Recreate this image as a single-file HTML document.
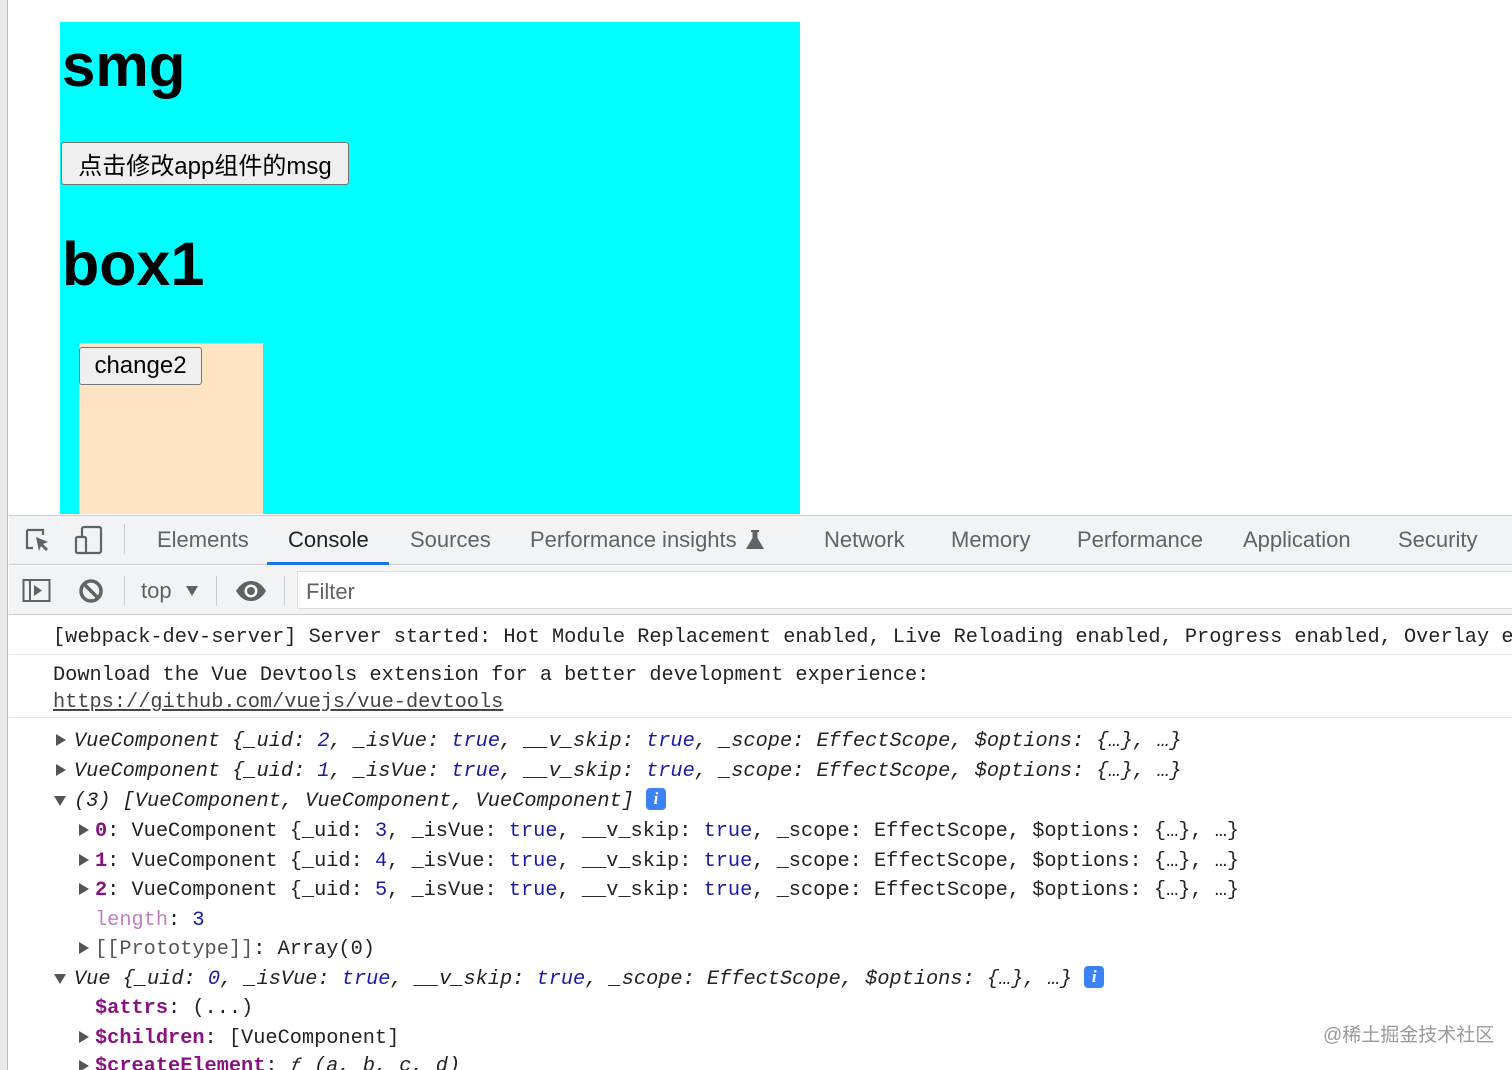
<!DOCTYPE html>
<html><head><meta charset="utf-8"><style>
*{margin:0;padding:0;box-sizing:border-box}
html,body{width:1512px;height:1070px;overflow:hidden;background:#fff;font-family:"Liberation Sans","Noto Sans CJK SC",sans-serif;position:relative}
.abs{position:absolute}
#lbar{left:0;top:0;width:8px;height:1070px;background:#e8e8e8;border-right:1px solid #bbb}
#cyan{left:60px;top:22px;width:740px;height:492px;background:#00ffff}
h1{position:absolute;font-weight:bold;color:#000;line-height:1}
.btn{position:absolute;background:#efefef;border:1.5px solid #767676;border-radius:3px;font-size:24px;color:#000;display:flex;align-items:center;justify-content:center}
#peach{left:79px;top:343px;width:184px;height:171px;background:#ffe4c4}
#tb1{left:9px;top:515px;width:1503px;height:50px;background:#f1f3f4;border-bottom:1px solid #cacdd1;border-top:1px solid #d0d0d0}
#tb2{left:9px;top:566px;width:1503px;height:49px;background:#f1f3f4;border-bottom:1px solid #cacdd1}
.tab{position:absolute;top:527px;font-size:22px;color:#5f6368;white-space:nowrap}
.mono{position:absolute;left:0;top:0;width:1512px;height:1070px;overflow:hidden;font-family:"Liberation Mono","DejaVu Sans Mono",monospace;font-size:20.3px;white-space:pre;color:#222;line-height:30px}
.ln{position:absolute;left:53px}
.i{font-style:italic}
.b{color:#1a1aa6}
.kb{color:#881280;font-weight:bold}
.lk{color:#c080c0}
.tri{position:absolute;width:0;height:0}
.tr{border-left:10px solid #555;border-top:6px solid transparent;border-bottom:6px solid transparent}
.td{border-top:10px solid #555;border-left:6px solid transparent;border-right:6px solid transparent}
.info{display:inline-block;width:20px;height:22px;background:#3b82f6;border-radius:4px;color:#fff;font-style:italic;font-weight:bold;font-size:17px;line-height:22px;text-align:center;vertical-align:2px;font-family:"Liberation Serif",serif}
</style></head><body>
<div class="abs" id="lbar"></div>
<div class="abs" id="cyan"></div>
<h1 style="left:62px;top:36px;font-size:60px">smg</h1>
<div class="btn" style="left:61px;top:142px;width:288px;height:43px">点击修改app组件的msg</div>
<h1 style="left:62px;top:234px;font-size:61px">box1</h1>
<div class="abs" id="peach"></div>
<div class="btn" style="left:79px;top:347px;width:123px;height:38px">change2</div>

<div class="abs" id="tb1"></div>
<svg class="abs" style="left:24px;top:527px" width="30" height="28" viewBox="0 0 30 28"><path d="M3 3h16v5M3 3v18h6" fill="none" stroke="#5f6368" stroke-width="2.2"/><path d="M12 10l12 5-5 2 5 5-2 2-5-5-2 5z" fill="#5f6368"/></svg>
<svg class="abs" style="left:73px;top:524px" width="32" height="32" viewBox="0 0 32 32"><rect x="9" y="3" width="19" height="26" rx="2" fill="none" stroke="#5f6368" stroke-width="2.2"/><rect x="3" y="13" width="10" height="16" rx="1.5" fill="#f1f3f4" stroke="#5f6368" stroke-width="2.2"/></svg>
<div class="abs" style="left:124px;top:524px;width:1px;height:30px;background:#ccc"></div>
<div class="tab" style="left:157px">Elements</div>
<div class="tab" style="left:288px;color:#202124">Console</div>
<div class="abs" style="left:267px;top:562px;width:122px;height:3px;background:#1a73e8"></div>
<div class="tab" style="left:410px">Sources</div>
<div class="tab" style="left:530px">Performance insights</div>
<svg class="abs" style="left:745px;top:529px" width="20" height="22" viewBox="0 0 20 22"><path d="M6 1h8v2h-1.5v6L19 20H1L7.5 9V3H6z" fill="#5f6368"/></svg>
<div class="tab" style="left:824px">Network</div>
<div class="tab" style="left:951px">Memory</div>
<div class="tab" style="left:1077px">Performance</div>
<div class="tab" style="left:1243px">Application</div>
<div class="tab" style="left:1398px">Security</div>

<div class="abs" id="tb2"></div>
<svg class="abs" style="left:22px;top:578px" width="30" height="26" viewBox="0 0 30 26"><rect x="1.5" y="2" width="26" height="21" fill="none" stroke="#5f6368" stroke-width="2"/><line x1="8" y1="2" x2="8" y2="23" stroke="#5f6368" stroke-width="2"/><path d="M12 7l8 5.5-8 5.5z" fill="#5f6368"/></svg>
<svg class="abs" style="left:78px;top:578px" width="26" height="26" viewBox="0 0 26 26"><circle cx="13" cy="13" r="10" fill="none" stroke="#5f6368" stroke-width="3.5"/><line x1="6" y1="6" x2="20" y2="20" stroke="#5f6368" stroke-width="3.5"/></svg>
<div class="abs" style="left:124px;top:576px;width:1px;height:30px;background:#ccc"></div>
<div class="abs" style="left:141px;top:578px;font-size:22px;color:#5f6368">top</div>
<div class="tri td abs" style="left:186px;top:586px;border-top-color:#5f6368"></div>
<div class="abs" style="left:216px;top:576px;width:1px;height:30px;background:#ccc"></div>
<svg class="abs" style="left:235px;top:580px" width="32" height="22" viewBox="0 0 32 22"><path d="M1 11C6 3 11 1 16 1s10 2 15 10c-5 8-10 10-15 10S6 19 1 11z" fill="#5f6368"/><circle cx="16" cy="11" r="6.5" fill="#fff"/><circle cx="16" cy="11" r="4" fill="#5f6368"/></svg>
<div class="abs" style="left:284px;top:576px;width:1px;height:30px;background:#ccc"></div>
<div class="abs" style="left:297px;top:571px;width:1215px;height:38px;background:#fff;border:1px solid #ddd;border-right:none"></div>
<div class="abs" style="left:306px;top:579px;font-size:22px;color:#5f6368">Filter</div>

<div class="abs" style="left:9px;top:654px;width:1503px;height:1px;background:#e8e8e8"></div>
<div class="abs" style="left:9px;top:717px;width:1503px;height:1px;background:#e8e8e8"></div>

<div class="mono">
<div class="ln" style="top:623px">[webpack-dev-server] Server started: Hot Module Replacement enabled, Live Reloading enabled, Progress enabled, Overlay enabled.</div>
<div class="ln" style="top:661px">Download the Vue Devtools extension for a better development experience:</div>
<div class="ln" style="top:688px;text-decoration:underline;color:#444">https://github.com/vuejs/vue-devtools</div>

<div class="tri tr" style="left:56px;top:734px"></div>
<div class="ln i" style="left:74px;top:727px">VueComponent {_uid: <span class="b">2</span>, _isVue: <span class="b">true</span>, __v_skip: <span class="b">true</span>, _scope: EffectScope, $options: {…}, …}</div>
<div class="tri tr" style="left:56px;top:764px"></div>
<div class="ln i" style="left:74px;top:757px">VueComponent {_uid: <span class="b">1</span>, _isVue: <span class="b">true</span>, __v_skip: <span class="b">true</span>, _scope: EffectScope, $options: {…}, …}</div>
<div class="tri td" style="left:54px;top:796px"></div>
<div class="ln i" style="left:74px;top:787px">(3) [VueComponent, VueComponent, VueComponent] <span class="info">i</span></div>

<div class="tri tr" style="left:79px;top:824px"></div>
<div class="ln" style="left:95px;top:817px"><span class="kb">0</span>: VueComponent {_uid: <span class="b">3</span>, _isVue: <span class="b">true</span>, __v_skip: <span class="b">true</span>, _scope: EffectScope, $options: {…}, …}</div>
<div class="tri tr" style="left:79px;top:854px"></div>
<div class="ln" style="left:95px;top:847px"><span class="kb">1</span>: VueComponent {_uid: <span class="b">4</span>, _isVue: <span class="b">true</span>, __v_skip: <span class="b">true</span>, _scope: EffectScope, $options: {…}, …}</div>
<div class="tri tr" style="left:79px;top:883px"></div>
<div class="ln" style="left:95px;top:876px"><span class="kb">2</span>: VueComponent {_uid: <span class="b">5</span>, _isVue: <span class="b">true</span>, __v_skip: <span class="b">true</span>, _scope: EffectScope, $options: {…}, …}</div>
<div class="ln" style="left:95px;top:906px"><span class="lk">length</span>: <span class="b">3</span></div>
<div class="tri tr" style="left:79px;top:942px"></div>
<div class="ln" style="left:95px;top:935px"><span style="color:#555">[[Prototype]]</span>: Array(0)</div>

<div class="tri td" style="left:54px;top:974px"></div>
<div class="ln i" style="left:74px;top:965px">Vue {_uid: <span class="b">0</span>, _isVue: <span class="b">true</span>, __v_skip: <span class="b">true</span>, _scope: EffectScope, $options: {…}, …} <span class="info">i</span></div>
<div class="ln" style="left:95px;top:994px"><span class="kb">$attrs</span>: (...)</div>
<div class="tri tr" style="left:79px;top:1031px"></div>
<div class="ln" style="left:95px;top:1024px"><span class="kb">$children</span>: [VueComponent]</div>
<div class="tri tr" style="left:79px;top:1060px"></div>
<div class="ln" style="left:95px;top:1052px"><span class="kb">$createElement</span>: <span class="i">ƒ (a, b, c, d)</span></div>
</div>

<div class="abs" style="left:1323px;top:1020px;font-size:19px;color:#9a9a9a">@稀土掘金技术社区</div>
</body></html>
